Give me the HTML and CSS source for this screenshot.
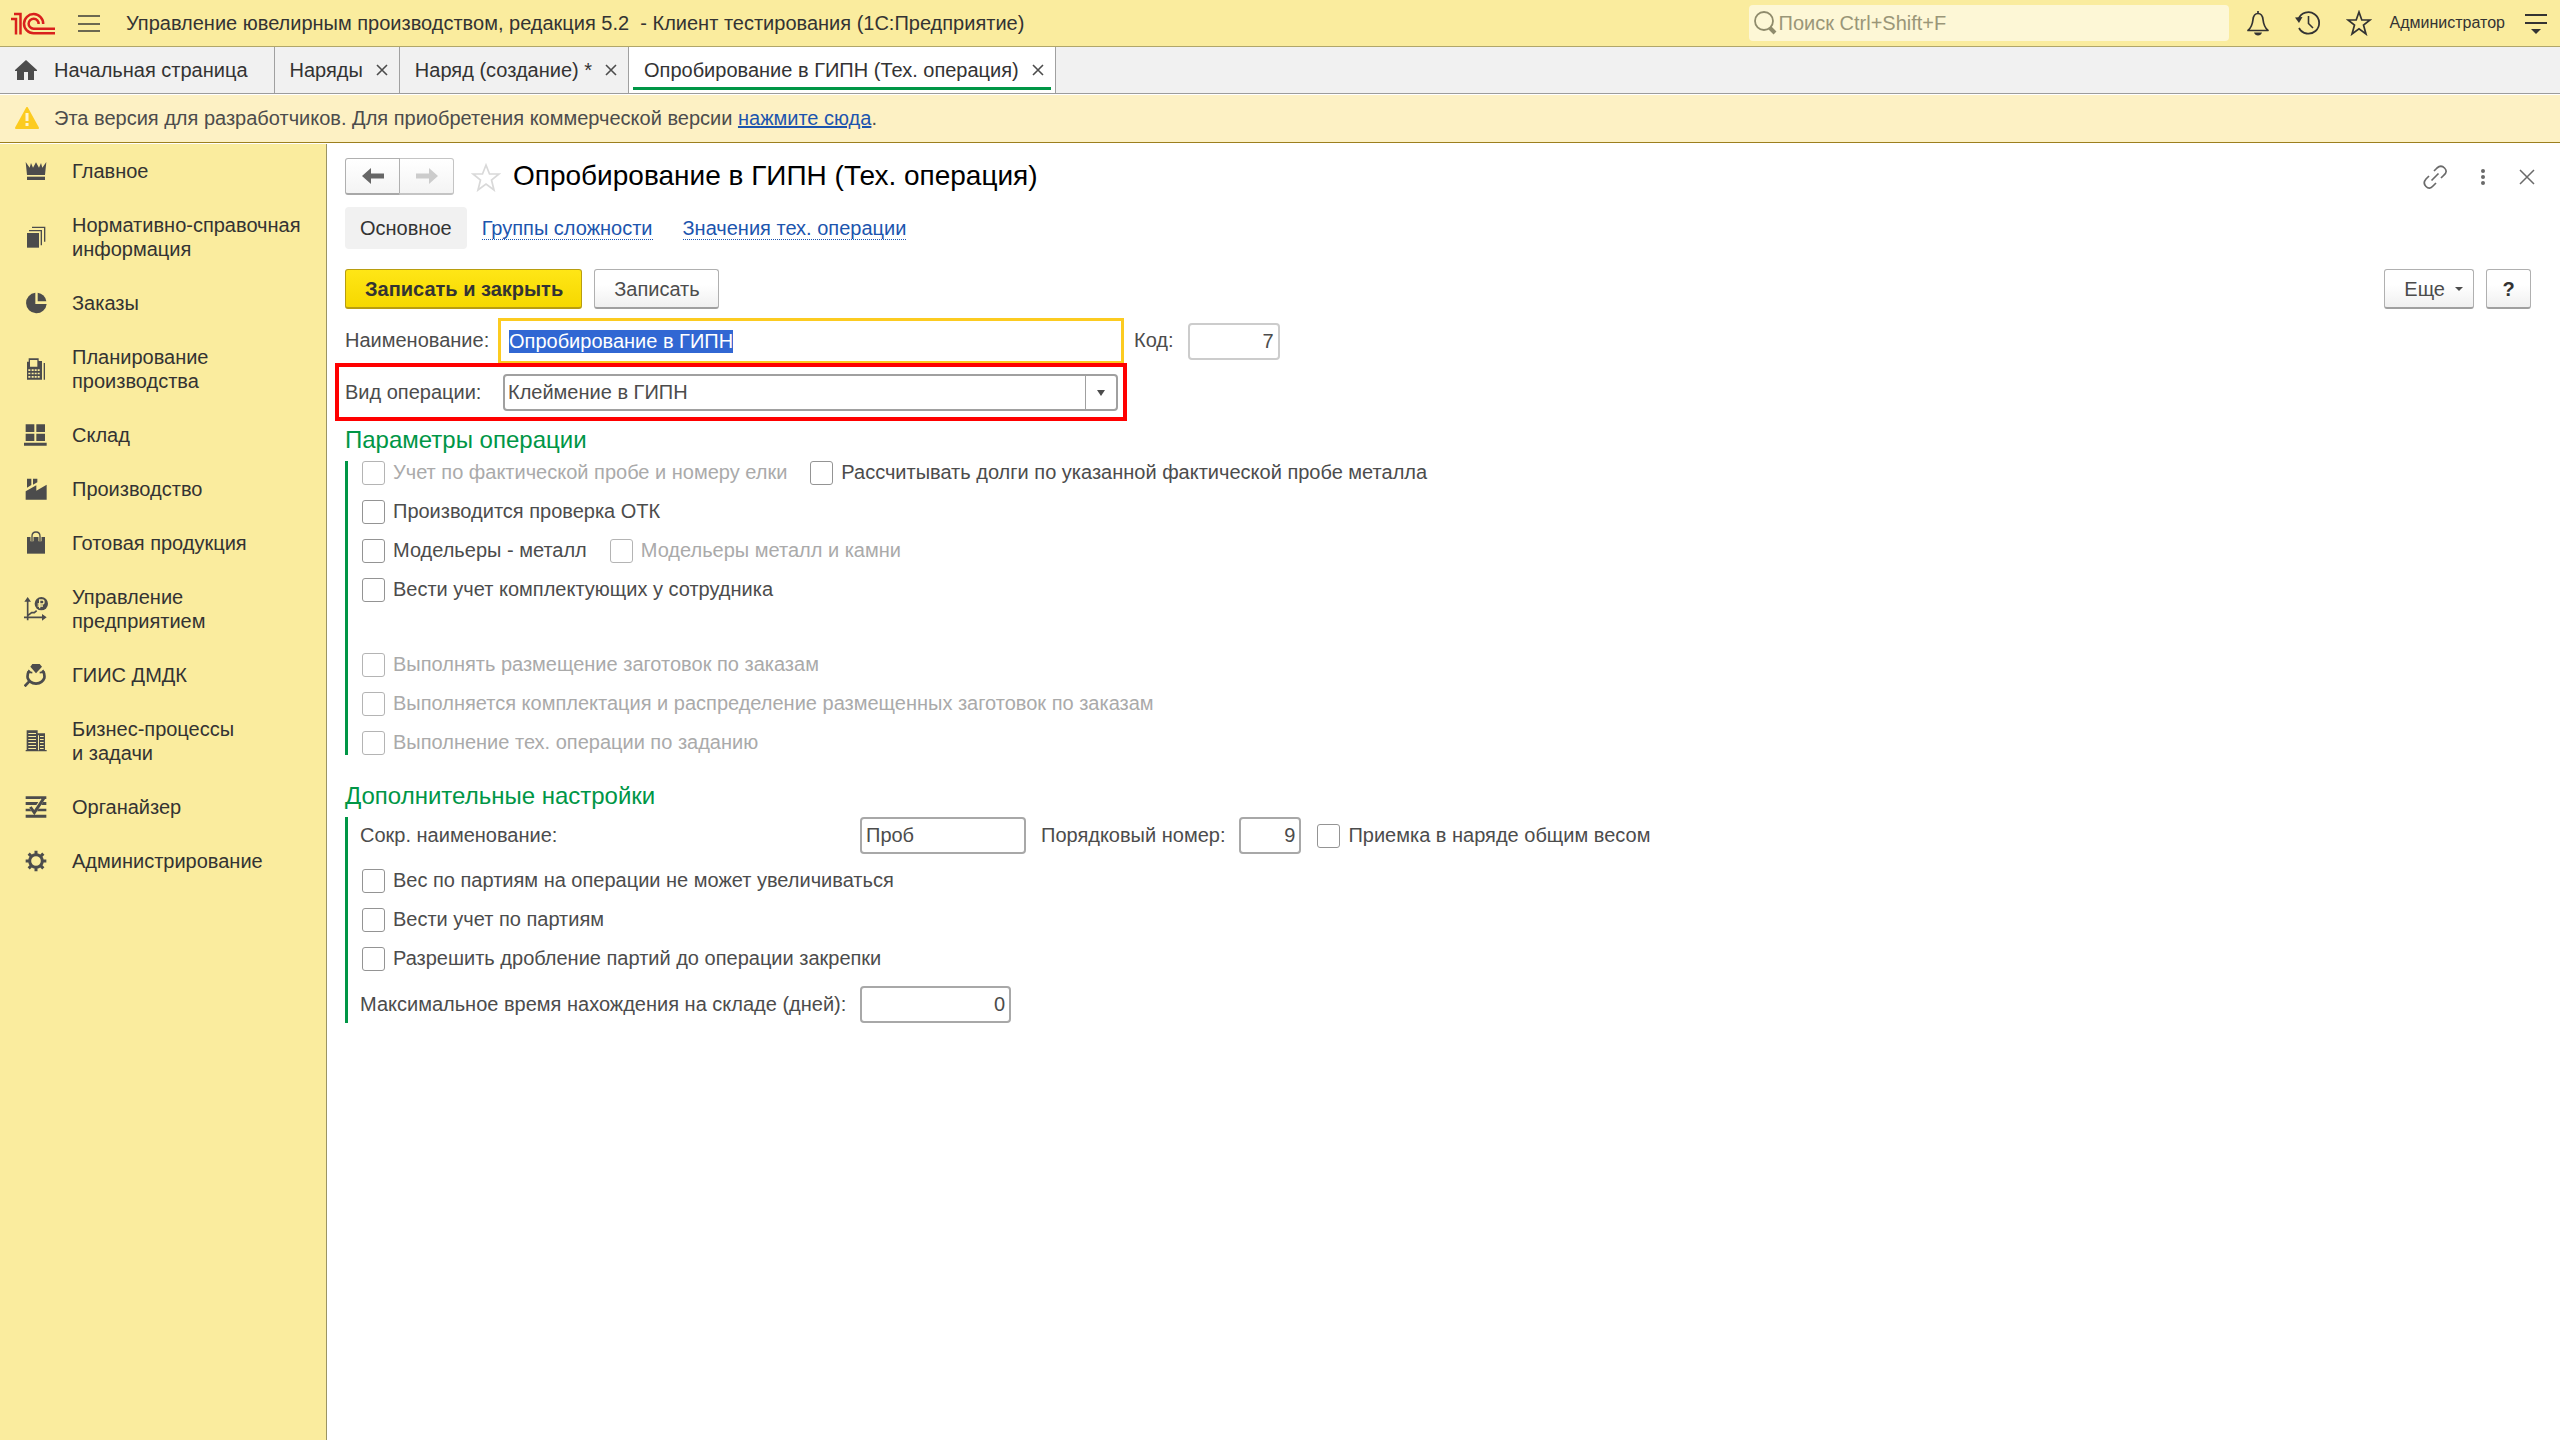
FILE: index.html
```html
<!DOCTYPE html>
<html lang="ru">
<head>
<meta charset="utf-8">
<title>Опробирование в ГИПН (Тех. операция)</title>
<link rel="stylesheet" href="styles.css">
</head>
<body>
<header class="topbar">
  <svg class="logo" viewBox="0 0 46 24" aria-label="1С"><g fill="none" stroke="#d9201d" stroke-width="2.500"><path d="M0 8H5V23.500"/><path d="M3 3H9.500V23.500"/><path d="M32.200 13A9.600 9.600 0 1 0 22.600 22.300H44"/><path d="M27.600 13A5 5 0 1 0 22.600 17.700H44"/></g></svg>
  <button class="icon-btn menu-btn" aria-label="Меню"><svg width="22" height="20" viewBox="0 0 22 20"><path d="M0 3H22M0 11H22M0 18H22" stroke="#3c3c38" stroke-width="1.700"/></svg></button>
  <h1 class="app-title">Управление ювелирным производством, редакция 5.2 &nbsp;- Клиент тестирования (1С:Предприятие)</h1>
  <div class="search">
    <svg width="24" height="26" viewBox="0 0 24 26"><circle cx="11" cy="11" r="9" fill="none" stroke="#8f8b6c" stroke-width="1.800"/><path d="M17 18 22 23" stroke="#8f8b6c" stroke-width="4"/></svg>
    <input class="search-input" type="search" placeholder="Поиск Ctrl+Shift+F" aria-label="Поиск">
  </div>
  <div class="top-icons">
    <button class="icon-btn" aria-label="Уведомления"><svg width="24" height="26" viewBox="0 0 24 26"><path d="M2 20.500C6 17 6.500 14 7 9.500 7.500 5 9 3.500 12 3.500S16.500 5 17 9.500C17.500 14 18 17 22 20.500ZM12 1V4" fill="none" stroke="#333" stroke-width="1.700" stroke-linejoin="round"/><path d="M8 22.500H16Q15 25.500 12 25.500T8 22.500Z" fill="#333"/></svg></button>
    <button class="icon-btn" aria-label="История"><svg width="26" height="26" viewBox="0 0 26 26"><path d="M3.500 9A10.700 10.700 0 1 1 4 18" fill="none" stroke="#333" stroke-width="1.800"/><path d="M0 7.500 7.500 7 4 13Z" fill="#333"/><path d="M13.500 6V13.500L18 18" fill="none" stroke="#333" stroke-width="1.600"/></svg></button>
    <button class="icon-btn" aria-label="Избранное"><svg width="26" height="26" viewBox="0 0 26 26"><path d="M13 2 15.800 10H24L17.500 15 20 24 13 18.800 6 24 8.500 15 2 10H10.200Z" fill="none" stroke="#333" stroke-width="1.700"/></svg></button>
  </div>
  <button class="user">Администратор</button>
  <button class="icon-btn" aria-label="Сервис"><svg width="24" height="22" viewBox="0 0 24 22"><path d="M1 3H23M1 11H23" stroke="#333" stroke-width="1.800"/><path d="M7 17H17L12 22Z" fill="#333"/></svg></button>
</header>

<nav class="tabs" aria-label="Открытые окна">
  <a class="tab tab-home" href="#"><svg width="22" height="20" viewBox="0 0 22 20"><path d="M11 0 22 10V11H19V20H13V12H9V20H2V11H0V10Z" fill="#4c4c4c"/></svg>Начальная страница</a>
  <div class="tab"><a href="#">Наряды</a><button class="icon-btn" aria-label="Закрыть"><svg width="12" height="12" viewBox="0 0 12 12"><path d="M1 1 11 11M11 1 1 11" stroke="#4c4c4c" stroke-width="1.600"/></svg></button></div>
  <div class="tab"><a href="#">Наряд (создание) *</a><button class="icon-btn" aria-label="Закрыть"><svg width="12" height="12" viewBox="0 0 12 12"><path d="M1 1 11 11M11 1 1 11" stroke="#4c4c4c" stroke-width="1.600"/></svg></button></div>
  <div class="tab tab-active"><a href="#">Опробирование в ГИПН (Тех. операция)</a><button class="icon-btn" aria-label="Закрыть"><svg width="12" height="12" viewBox="0 0 12 12"><path d="M1 1 11 11M11 1 1 11" stroke="#4c4c4c" stroke-width="1.600"/></svg></button></div>
</nav>

<div class="notice">
  <svg width="24" height="22" viewBox="0 0 24 22"><path d="M12 1 23 21H1Z" fill="#fccb20" stroke="#fccb20" stroke-width="2" stroke-linejoin="round"/><path d="M12 6V14M12 16V19" stroke="#fff4cf" stroke-width="3"/></svg>
  <p>Эта версия для разработчиков. Для приобретения коммерческой версии <a href="#">нажмите сюда</a>.</p>
</div>

<div class="workspace">
<nav class="sidebar" aria-label="Разделы">
  <a href="#"><svg viewBox="0 0 72 72"><path d="M5 9 17 26 21 12 27 26 36 10 45 26 51 12 55 26 67 9 63 48H9Z"/><path d="M9 53H63V63H9Z"/></svg>Главное</a>
  <a href="#"><svg viewBox="0 0 72 72"><path d="M9 24H45V68H9Z"/><path d="M15 15H54V61H50V19H15ZM24 5H64V50H60V9H24Z"/></svg>Нормативно-справочная<br>информация</a>
  <a href="#"><svg viewBox="0 0 72 72"><path d="M34 5A31 31 0 1 0 68 39H34Z"/><path d="M41 5A30 30 0 0 1 67 31H41Z"/></svg>Заказы</a>
  <a href="#"><svg viewBox="0 0 72 72"><path fill-rule="evenodd" d="M14 4H44V12H54V68H9V14H14ZM18 9V29H40V9ZM13 37H19V42H13ZM23 37H29V42H23ZM32 37H38V42H32ZM41 37H47V42H41ZM13 47H19V52H13ZM23 47H29V52H23ZM32 47H38V52H32ZM41 47H47V52H41ZM13 57H19V62H13ZM23 57H29V62H23ZM32 57H38V62H32ZM41 57H47V62H41Z"/><path d="M59 18H63V68H59Z"/></svg>Планирование<br>производства</a>
  <a href="#"><svg viewBox="0 0 72 72"><path d="M5 4H31V27H5ZM37 4H63V27H37ZM5 32H31V54H5ZM37 32H63V54H37ZM0 59H68V68H0Z"/></svg>Склад</a>
  <a href="#"><svg viewBox="0 0 72 72"><path d="M5 43 37 25V41L68 23V68H5ZM9 5H22V24L9 32ZM27 5H40V16L27 23Z"/></svg>Производство</a>
  <a href="#"><svg viewBox="0 0 72 72"><path d="M9 18H63V68H9Z"/><path d="M24 31V16Q24 3 36 3T48 16V31" fill="none" stroke="#faec9e" stroke-width="9"/><path d="M24 31V16Q24 3 36 3T48 16V31" fill="none" stroke="#4c4c4c" stroke-width="4"/></svg>Готовая продукция</a>
  <a href="#"><svg viewBox="0 0 72 72"><g fill="none" stroke="#4c4c4c" stroke-width="5"><path d="M11 10V70M0 61H60M12 55 23 47 31 47 38 41"/></g><path d="M11 0 21 14H1ZM68 61 54 51V71Z"/><circle cx="52" cy="20" r="20"/><path d="M47 34V9H55Q60 9 60 15T55 21H41M41 27H57" fill="none" stroke="#faec9e" stroke-width="4"/></svg>Управление<br>предприятием</a>
  <a href="#"><svg viewBox="0 0 72 72"><path d="M25 3H47L54 11 36 31 19 11Z"/><path d="M17 22Q9 32 11 45 16 60 36 62 56 60 61 45 63 32 55 22M18 53 2 70" fill="none" stroke="#4c4c4c" stroke-width="8"/><path d="M9 27 25 29M47 29 63 27" stroke="#4c4c4c" stroke-width="5"/></svg>ГИИС ДМДК</a>
  <a href="#"><svg viewBox="0 0 72 72"><path fill-rule="evenodd" d="M8 4H41V13H63V63H68V67H5V63H8ZM13 12V15H36V12ZM13 21V24H36V21ZM13 30V33H36V30ZM13 39V42H36V39ZM13 48V51H36V48ZM13 57V60H36V57ZM42 19V64H45V19ZM48 21V24H59V21ZM48 30V33H59V30ZM48 39V42H59V39ZM48 48V51H59V48ZM48 57V60H59V57Z"/></svg>Бизнес-процессы<br>и задачи</a>
  <a href="#"><svg viewBox="0 0 72 72"><path d="M5 4H67V12H5ZM5 21H67V30H5ZM5 41H67V49H5ZM5 59H67V68H5Z"/><path d="M20 36 31 50 55 14" fill="none" stroke="#faec9e" stroke-width="12"/><path d="M19 36 31 53 60 9" fill="none" stroke="#4c4c4c" stroke-width="9"/></svg>Органайзер</a>
  <a href="#"><svg viewBox="0 0 72 72"><circle cx="36" cy="36" r="19" fill="none" stroke="#4c4c4c" stroke-width="9"/><path d="M36 5V18M36 54V67M5 36H18M54 36H67M14 14 23 23M49 49 58 58M58 14 49 23M23 49 14 58" stroke="#4c4c4c" stroke-width="9"/></svg>Администрирование</a>
</nav>

<main class="form">
  <div class="form-head">
    <div class="history">
      <button aria-label="Назад"><svg width="22" height="16" viewBox="0 0 22 16"><path d="M0 8 9 0V5.500H22V10.500H9V16Z" fill="#666"/></svg></button>
      <button aria-label="Вперед" disabled><svg width="22" height="16" viewBox="0 0 22 16"><path d="M22 8 13 0V5.500H0V10.500H13V16Z" fill="#ccc"/></svg></button>
    </div>
    <button class="icon-btn" aria-label="В избранное"><svg width="30" height="30" viewBox="0 0 30 30"><path d="M15 3 18.500 12H28L20.500 18 23 28 15 22 7 28 9.500 18 2 12H11.500Z" fill="none" stroke="#d9d9d9" stroke-width="1.700"/></svg></button>
    <h2>Опробирование в ГИПН (Тех. операция)</h2>
    <div class="head-tools">
      <button class="icon-btn" aria-label="Ссылка"><svg width="24" height="24" viewBox="0 0 24 24"><g fill="none" stroke="#6a6a6a" stroke-width="1.700"><path d="M11 6 14 3Q18 -.500 21.500 3T21 10L18 13"/><path d="M6 11 3 14Q-.500 18 3 21.500T10 21L13 18M8.500 15.500 15.500 8.500"/></g></svg></button>
      <button class="icon-btn" aria-label="Действия"><svg width="6" height="18" viewBox="0 0 6 18"><g fill="#6a6a6a"><circle cx="3" cy="3" r="2"/><circle cx="3" cy="9" r="2"/><circle cx="3" cy="15" r="2"/></g></svg></button>
      <button class="icon-btn" aria-label="Закрыть"><svg width="16" height="16" viewBox="0 0 16 16"><path d="M1 1 15 15M15 1 1 15" stroke="#6a6a6a" stroke-width="1.500"/></svg></button>
    </div>
  </div>

  <nav class="subnav" aria-label="Разделы формы">
    <span class="current">Основное</span>
    <a href="#">Группы сложности</a>
    <a href="#">Значения тех. операции</a>
  </nav>

  <div class="commands">
    <button class="btn btn-primary">Записать и закрыть</button>
    <button class="btn">Записать</button>
    <button class="btn btn-more">Еще<svg width="8" height="4" viewBox="0 0 8 4"><path d="M0 0H8L4 4Z" fill="#4c4c4c"/></svg></button>
    <button class="btn btn-help" aria-label="Справка">?</button>
  </div>

  <div class="row row-name">
    <label class="main-label" for="name">Наименование:</label>
    <input class="field-name" id="name" type="text" value="Опробирование в ГИПН" autofocus>
    <label for="code">Код:</label>
    <input class="field field-code" id="code" type="text" value="7">
  </div>
  <div class="row row-kind">
    <label class="main-label" for="kind">Вид операции:</label>
    <div class="combo">
      <input id="kind" type="text" value="Клеймение в ГИПН">
      <button aria-label="Выбрать"><svg width="8" height="6" viewBox="0 0 8 6"><path d="M0 0H8L4 6Z" fill="#4c4c4c"/></svg></button>
    </div>
  </div>

  <section>
    <h3>Параметры операции</h3>
    <div class="group">
      <div class="checks">
        <label class="check off"><input type="checkbox" disabled>Учет по фактической пробе и номеру елки</label>
        <label class="check"><input type="checkbox">Рассчитывать долги по указанной фактической пробе металла</label>
      </div>
      <div class="checks"><label class="check"><input type="checkbox">Производится проверка ОТК</label></div>
      <div class="checks">
        <label class="check"><input type="checkbox">Модельеры - металл</label>
        <label class="check off"><input type="checkbox" disabled>Модельеры металл и камни</label>
      </div>
      <div class="checks"><label class="check"><input type="checkbox">Вести учет комплектующих у сотрудника</label></div>
      <div class="checks checks-apart"><label class="check off"><input type="checkbox" disabled>Выполнять размещение заготовок по заказам</label></div>
      <div class="checks"><label class="check off"><input type="checkbox" disabled>Выполняется комплектация и распределение размещенных заготовок по заказам</label></div>
      <div class="checks"><label class="check off"><input type="checkbox" disabled>Выполнение тех. операции по заданию</label></div>
    </div>
  </section>

  <section class="extra">
    <h3>Дополнительные настройки</h3>
    <div class="group">
      <div class="row row-short">
        <label class="wide-label" for="short">Сокр. наименование:</label>
        <input class="field field-short" id="short" type="text" value="Проб">
        <label class="order-label" for="order">Порядковый номер:</label>
        <input class="field field-order" id="order" type="text" value="9">
        <label class="check"><input type="checkbox">Приемка в наряде общим весом</label>
      </div>
      <div class="checks"><label class="check"><input type="checkbox">Вес по партиям на операции не может увеличиваться</label></div>
      <div class="checks"><label class="check"><input type="checkbox">Вести учет по партиям</label></div>
      <div class="checks"><label class="check"><input type="checkbox">Разрешить дробление партий до операции закрепки</label></div>
      <div class="row">
        <label class="wide-label" for="days">Максимальное время нахождения на складе (дней):</label>
        <input class="field field-days" id="days" type="text" value="0">
      </div>
    </div>
  </section>
</main>
</div>
<script src="form.js"></script>
</body>
</html>
```
FILE: styles.css
```css
* { box-sizing: border-box; }
body {
  margin: 0;
  min-height: 100vh;
  display: flex;
  flex-direction: column;
  font: 20px/24px "Liberation Sans", Arial, sans-serif;
  color: #4c4c4c;
  background: #fff;
}
h1, h2, h3, p { margin: 0; font-weight: normal; }
svg { flex: none; display: block; }
button, input { font: inherit; color: inherit; }
button { padding: 0; border: 0; background: none; }
a { color: #1c55ae; }
.icon-btn { display: flex; align-items: center; justify-content: center; }

/* Top bar */
.topbar {
  display: flex;
  align-items: center;
  height: 47px;
  padding: 0 12px 0 11px;
  background: #faec9e;
  border-bottom: 1px solid #b0a66a;
}
.logo { width: 46px; height: 24px; margin-right: 21px; }
.menu-btn { margin-right: 26px; }
.app-title { font-size: 20px; color: #333; flex: 1; }
.search {
  display: flex;
  align-items: center;
  width: 480px;
  height: 36px;
  padding-left: 4px;
  margin-right: 17px;
  background: #fdf7d6;
  border-radius: 4px;
}
.search-input { flex: 1; min-width: 0; border: 0; padding: 0 2px; background: none; outline: 0; }
.search-input::placeholder { color: #9a9678; opacity: 1; }
.top-icons { display: flex; gap: 25px; margin-right: 18px; }
.user { font-size: 16px; color: #333; margin-right: 19px; }

/* Window tabs */
.tabs { display: flex; height: 47px; background: #f1f1f1; border-bottom: 1px solid #9c9c9c; }
.tab {
  display: flex;
  align-items: center;
  gap: 13px;
  padding: 0 11px 0 15px;
  border-right: 1px solid #a0a0a0;
  color: #333;
}
.tab a, .tab-home { color: #333; text-decoration: none; }
.tab-home { gap: 17px; padding: 0 26px 0 15px; }
.tab-active { background: linear-gradient(#009646, #009646) 4px 40px / calc(100% - 8px) 3px no-repeat #fff; }

/* Developer notice */
.notice {
  display: flex;
  align-items: center;
  gap: 15px;
  height: 48px;
  margin-top: 1px;
  padding: 0 15px 2px;
  background: #fdf1c4;
  border-bottom: 1px solid #9c7f1e;
}

/* Sidebar */
.workspace { display: flex; flex: 1; padding-top: 1px; }
.sidebar {
  width: 327px;
  flex: none;
  background: #faec9e;
  border-right: 1px solid #9b9463;
}
.sidebar a {
  display: flex;
  align-items: center;
  gap: 24px;
  padding: 15px 0 15px 24px;
  color: #333;
  text-decoration: none;
}
.sidebar svg { width: 24px; height: 24px; fill: #4c4c4c; }

/* Form */
.form { flex: 1; padding: 14px 29px 40px 18px; }
.form-head { display: flex; align-items: center; height: 37px; }
.history { display: flex; margin-right: 17px; }
.history button {
  display: flex;
  align-items: center;
  justify-content: center;
  width: 55px;
  height: 37px;
  border: 1px solid #b0b0b0;
  border-bottom: 2px solid #a8a8a8;
  border-radius: 3px 0 0 3px;
  background: linear-gradient(#fff, #f4f4f4);
}
.history button + button { width: 54px; border-left: 0; border-color: #c4c4c4; border-radius: 0 3px 3px 0; }
.form-head h2 { font-size: 28px; line-height: 32px; color: #000; margin-left: 12px; padding-bottom: 2px; }
.head-tools { display: flex; align-items: center; gap: 33px; margin-left: auto; margin-right: -4px; }

.subnav { display: flex; align-items: center; gap: 30px; margin: 12px 0 20px; }
.subnav .current { padding: 9px 15px; margin-right: -15px; background: #f1f1f1; border-radius: 4px; color: #333; }
.subnav a { text-decoration: none; border-bottom: 1px dotted #1c55ae; line-height: 22px; }

.commands { display: flex; gap: 12px; }
.btn {
  height: 40px;
  padding: 0 18px 0 19px;
  border: 1px solid #b0b0b0;
  border-bottom: 2px solid #a0a0a0;
  border-radius: 3px;
  background: linear-gradient(#fff 40%, #f0f0f0);
}
.btn-primary {
  font-weight: bold;
  color: #333;
  border-color: #b89d10;
  background: linear-gradient(#ffe616, #f6d800);
}
.btn-more { display: flex; align-items: center; gap: 10px; margin-left: auto; padding: 0 10px 0 19px; }
.btn-help { width: 45px; padding: 0; font-weight: bold; color: #333; }

.row { display: flex; align-items: center; }
.row > label { padding-bottom: 2px; }
.main-label { width: 153px; }
.row-name { margin-top: 9px; height: 46px; }
.field-name {
  width: 626px;
  height: 46px;
  margin-right: 10px;
  padding: 0 8px;
  border: 3px solid #fccb20;
  outline: 0;
}
.field-name::selection { background: #3167d3; color: #fff; }
.field {
  height: 37px;
  padding: 0 4px;
  border: 2px solid #a8a8a8;
  border-radius: 4px;
}
.field-code { width: 92px; margin-left: 14px; border-color: #ccc; text-align: right; }

.row-kind { position: relative; height: 57px; width: 773px; }
.row-kind::before {
  content: "";
  position: absolute;
  inset: -1px -9px 0 -10px;
  border: 4px solid #f00;
  pointer-events: none;
}
.combo {
  display: flex;
  width: 615px;
  height: 37px;
  margin-left: 5px;
  border: 2px solid #a0a0a0;
  border-radius: 4px;
}
.combo input { flex: 1; min-width: 0; padding: 0 3px 2px; border: 0; background: none; }
.combo button { display: flex; align-items: center; justify-content: center; width: 31px; border-left: 1px solid #a0a0a0; }

h3 { font-size: 24px; line-height: 28px; color: #009646; }
section { margin-top: 5px; }
.extra { margin-top: 27px; }
.group {
  display: flex;
  flex-direction: column;
  gap: 15px;
  margin-top: 7px;
  padding-left: 12px;
  border-left: 3px solid #009646;
}
.checks { display: flex; gap: 23px; padding-left: 2px; }
.checks-apart { margin-top: 36px; }
.check { display: flex; gap: 8px; line-height: 22px; }
.check input {
  appearance: none;
  flex: none;
  width: 23px;
  height: 24px;
  margin: 0;
  border: 1px solid #949494;
  border-radius: 3px;
  background: #fff;
}
.off { color: #aaa; }
.check.off input { border-color: #b4b4b4; }
.row > .check { padding: 0; }
.wide-label { width: 500px; }
.field-short { width: 166px; }
.order-label { margin: 0 14px 0 15px; }
.field-order { width: 62px; margin-right: 16px; text-align: right; }
.field-days { width: 151px; text-align: right; }
```
FILE: form.js
```js
const nameField = document.getElementById("name");
nameField.focus();
nameField.select();
```
